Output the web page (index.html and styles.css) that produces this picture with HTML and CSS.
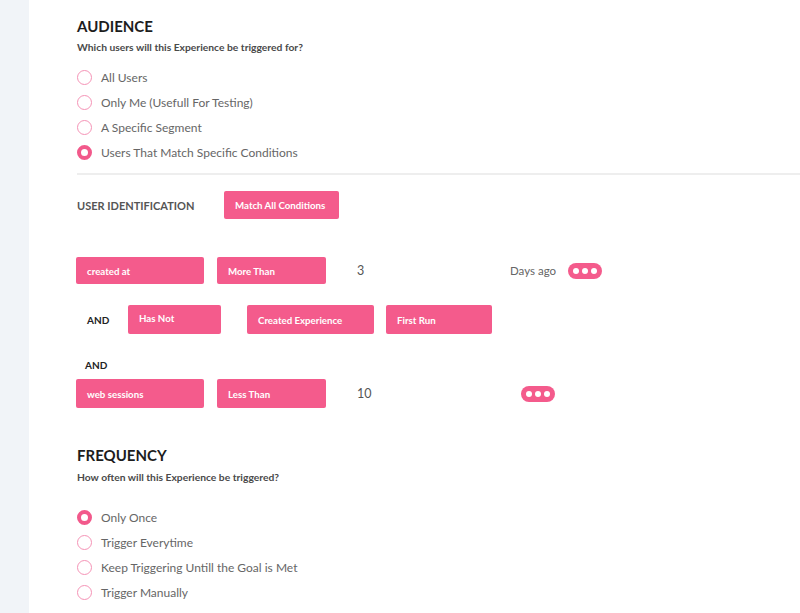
FILE: index.html
```html
<!DOCTYPE html>
<html>
<head>
<meta charset="utf-8">
<link rel="stylesheet" href="styles.css">
</head>
<body>
<div class="page">
  <aside class="sidebar"></aside>
  <main class="main">
    <section class="audience">
      <h2 class="title">AUDIENCE</h2>
      <p class="subtitle">Which users will this Experience be triggered for?</p>
      <ul class="radios">
        <li class="radio"><span class="dot"></span><span class="label">All Users</span></li>
        <li class="radio"><span class="dot"></span><span class="label">Only Me (Usefull For Testing)</span></li>
        <li class="radio"><span class="dot"></span><span class="label">A Specific Segment</span></li>
        <li class="radio checked"><span class="dot"></span><span class="label">Users That Match Specific Conditions</span></li>
      </ul>
    </section>
    <hr class="divider">
    <div class="ident">
      <span class="ident-label">USER IDENTIFICATION</span>
      <span class="btn match">Match All Conditions</span>
    </div>
    <div class="cond row1">
      <span class="btn w-field">created at</span>
      <span class="btn w-op">More Than</span>
      <span class="value">3</span>
      <span class="unit">Days ago</span>
      <span class="more"><i></i><i></i><i></i></span>
    </div>
    <div class="cond row2">
      <span class="and">AND</span>
      <span class="btn w-hasnot up">Has Not</span>
      <span class="btn w-exp">Created Experience</span>
      <span class="btn w-run">First Run</span>
    </div>
    <div class="and2">AND</div>
    <div class="cond row3">
      <span class="btn w-field">web sessions</span>
      <span class="btn w-op">Less Than</span>
      <span class="value">10</span>
      <span class="more more2"><i></i><i></i><i></i></span>
    </div>
    <section class="frequency">
      <h2 class="title">FREQUENCY</h2>
      <p class="subtitle subtitle-f">How often will this Experience be triggered?</p>
      <ul class="radios radios-f">
        <li class="radio checked"><span class="dot"></span><span class="label">Only Once</span></li>
        <li class="radio"><span class="dot"></span><span class="label">Trigger Everytime</span></li>
        <li class="radio"><span class="dot"></span><span class="label">Keep Triggering Untill the Goal is Met</span></li>
        <li class="radio"><span class="dot"></span><span class="label">Trigger Manually</span></li>
      </ul>
    </section>
  </main>
</div>
</body>
</html>
```
FILE: styles.css
```css
* { box-sizing: border-box; }
html, body { margin: 0; padding: 0; background: #fff; }
body { font-family: Lato, "Open Sans", sans-serif; color: #333; width: 800px; height: 613px; overflow: hidden; }
.page { display: flex; min-height: 613px; }
.sidebar { width: 29px; flex: none; background: #f1f4f8; }
.main { flex: 1; padding-left: 48px; padding-top: 16px; }
.title { margin: 0; font-size: 15px; font-weight: 700; color: #1d1d1d; line-height: 20px; }
.subtitle { margin: 4px 0 0; font-size: 10.3px; font-weight: 700; color: #4a4a4a; line-height: 14px; }
.subtitle-f { margin-top: 5px; }
.radios { list-style: none; margin: 11px 0 0; padding: 0; }
.radio { display: flex; align-items: center; height: 25px; }
.dot { width: 15px; height: 15px; border-radius: 50%; border: 1.5px solid #f593b6; flex: none; }
.radio.checked .dot { border: 4.5px solid #f2598b; }
.label { margin-left: 9px; font-size: 12px; color: #666; white-space: nowrap; }
.divider { border: 0; border-top: 2px solid #eeeeee; margin: 8px 0 0; }
.ident { display: flex; align-items: center; margin-top: 16px; height: 28px; }
.ident-label { font-size: 11px; font-weight: 700; color: #555; width: 147px; }
.btn { display: flex; align-items: center; background: #f45b8c; color: #fff; font-size: 9.7px; font-weight: 700; height: 28px; padding: 0 11px; border-radius: 2px; flex: none; white-space: nowrap; }
.match { width: 115px; }
.cond { display: flex; align-items: center; margin-left: -1px; }
.row1 { margin-top: 38px; }
.row1 .btn { height: 27px; }
.w-field { width: 128px; margin-right: 13px; }
.w-op { width: 109px; margin-right: 31px; }
.value { font-size: 12.5px; color: #555; width: 153px; }
.unit { font-size: 11.5px; color: #666; width: 58px; }
.more { display: flex; align-items: center; justify-content: center; gap: 3px; width: 34px; height: 16px; border-radius: 8px; background: #f45b8c; }
.more i { width: 6px; height: 6px; border-radius: 50%; background: #fff; }
.row2 { margin-top: 21px; }
.row2 .btn { height: 29px; }
.and { font-size: 10px; font-weight: 700; color: #222; margin-left: 11px; width: 41px; }
.w-hasnot { width: 93px; margin-right: 26px; }
.up { align-items: flex-start; padding-top: 7px; }
.w-exp { width: 127px; margin-right: 12px; }
.w-run { width: 106px; }
.and2 { font-size: 10px; font-weight: 700; color: #222; margin-left: 8px; margin-top: 25px; line-height: 12px; }
.row3 { margin-top: 8px; }
.row3 .btn { height: 29px; }
.row3 .value { width: 164px; }
.frequency { margin-top: 37px; }
.radios-f { margin-top: 21px; }
```
